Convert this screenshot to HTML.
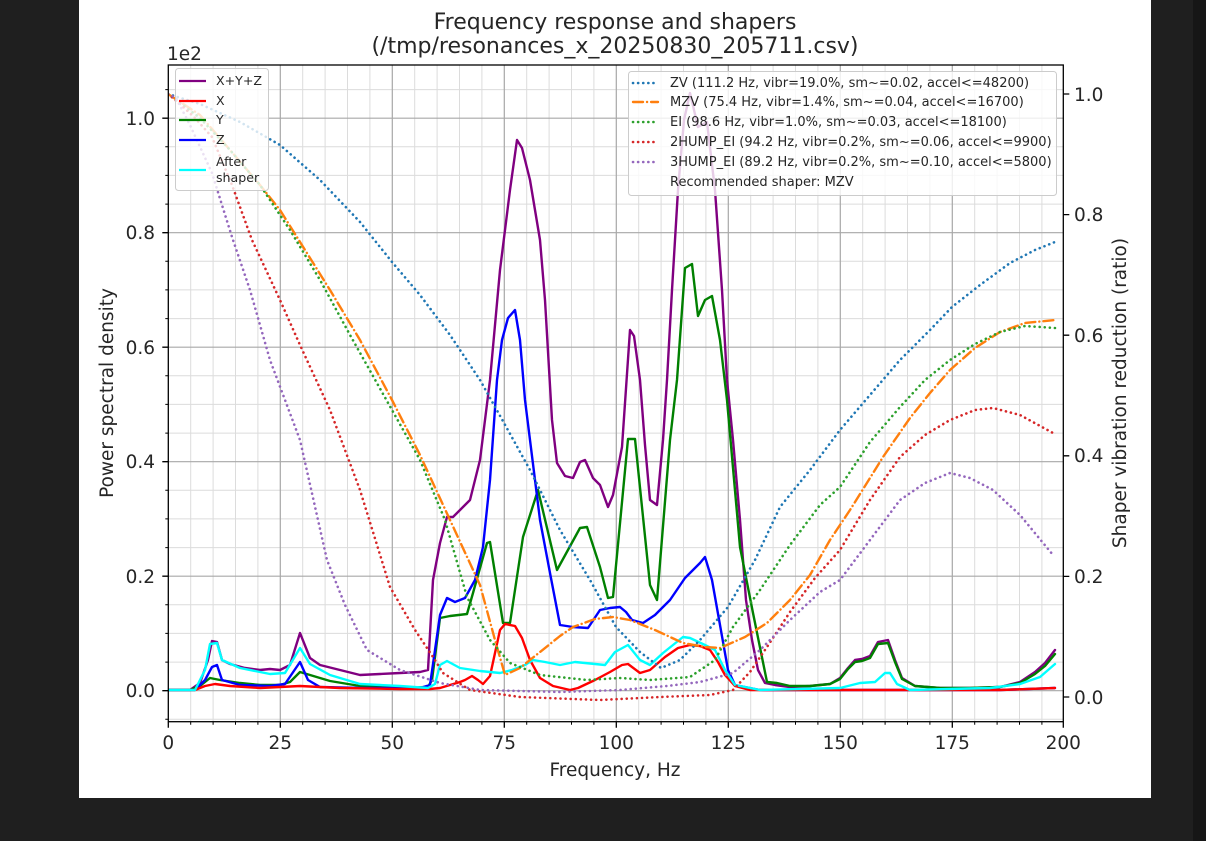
<!DOCTYPE html>
<html><head><meta charset="utf-8"><style>
html,body{margin:0;padding:0;background:#1f1f1f;width:1206px;height:841px;overflow:hidden}
svg{display:block}
text{font-family:"DejaVu Sans","Liberation Sans",sans-serif;fill:#262626}
</style></head><body>
<svg width="1206" height="841" viewBox="0 0 1206 841" xmlns="http://www.w3.org/2000/svg">
<rect x="0" y="0" width="1206" height="841" fill="#1f1f1f"/>
<rect x="1193" y="0" width="13" height="841" fill="#161616"/>
<rect x="79" y="0" width="1072" height="798" fill="#ffffff"/>
<defs><clipPath id="c"><rect x="168.3" y="65" width="895" height="657"/></clipPath></defs>
<path stroke="#dcdcdc" stroke-width="1" fill="none" d="
M190.7 65V722M213.1 65V722M235.5 65V722M257.9 65V722M302.7 65V722M325.1 65V722M347.5 65V722M369.9 65V722M414.7 65V722M437.1 65V722M459.5 65V722M481.9 65V722M526.7 65V722M549.1 65V722M571.5 65V722M593.9 65V722M638.7 65V722M661.1 65V722M683.5 65V722M705.9 65V722M750.7 65V722M773.1 65V722M795.5 65V722M817.9 65V722M862.7 65V722M885.1 65V722M907.5 65V722M929.9 65V722M974.7 65V722M997.1 65V722M1019.5 65V722M1041.9 65V722
M168 719.3H1063M168 662.1H1063M168 633.4H1063M168 604.8H1063M168 547.6H1063M168 518.9H1063M168 490.3H1063M168 433.1H1063M168 404.4H1063M168 375.8H1063M168 318.6H1063M168 289.9H1063M168 261.3H1063M168 204.1H1063M168 175.4H1063M168 146.8H1063M168 89.6H1063"/>
<path stroke="#a8a8a8" stroke-width="1.2" fill="none" d="M280.3 65V722M392.3 65V722M504.3 65V722M616.3 65V722M728.3 65V722M840.3 65V722M952.3 65V722
M168 690.7H1063M168 576.2H1063M168 461.7H1063M168 347.2H1063M168 232.7H1063M168 118.2H1063"/>

<g clip-path="url(#c)" fill="none" stroke-linejoin="round" stroke-linecap="round">
<polyline stroke="#800080" stroke-width="2.4" points="168,690 190,690 200,683 208,660 212,641 217,642 222,660 230,664 245,668 260,670 270,669 280,670 290,665 300,633 310,658 320,665 340,670 360,675 380,674 400,673 420,672 428,670 433,580 440,543 447,517 453,517 462,508 470,500 480,460 490,380 500,270 510,190 517,140 522,148 530,180 540,240 545,300 552,420 557,463 565,476 573,478 580,462 585,460 593,478 600,485 608,507 613,495 622,447 630,330 634,336 640,380 645,445 650,500 657,505 663,440 667,380 672,290 678,190 684,120 690,93 698,127 707,122 715,190 722,290 727,380 733,440 740,520 746,600 752,640 758,670 765,683 775,685 790,687 810,686 830,684 840,678 848,668 855,660 862,659 870,656 878,642 888,640 895,660 902,678 915,686 940,688 970,688 1000,687 1020,682 1035,672 1045,663 1055,650"/>
<polyline stroke="#008000" stroke-width="2.4" points="168,690 190,690 200,686 210,678 220,680 240,683 260,685 280,685 290,682 300,672 310,675 330,681 360,686 400,688 428,687 432,680 440,618 450,616 467,614 473,593 487,543 490,542 503,623 510,623 523,537 538,490 557,570 580,528 587,527 600,567 608,598 613,597 628,439 635,439 650,585 657,600 670,440 677,380 685,268 692,264 698,316 705,300 712,296 720,340 727,400 740,547 753,613 767,682 777,683 790,686 810,686 830,684 840,679 848,669 855,662 862,661 870,658 878,644 888,643 895,662 902,679 915,686 940,688 970,688 1000,687 1020,683 1035,674 1045,666 1055,654"/>
<polyline stroke="#0000ff" stroke-width="2.4" points="168,690 195,690 205,680 212,667 217,665 222,680 240,685 270,686 285,684 300,662 308,680 320,687 360,688 420,688 430,685 435,650 440,615 447,598 455,602 465,598 475,580 483,547 490,480 497,380 502,340 508,318 515,310 520,340 525,400 530,440 540,520 550,573 560,625 573,627 588,628 600,610 610,608 620,607 626,612 632,620 643,623 655,615 670,600 685,578 700,563 705,557 712,580 720,625 728,670 735,685 760,690 1000,690 1055,688"/>
<polyline stroke="#ff0000" stroke-width="2.4" points="168,690 195,690 205,686 215,684 230,686 260,688 300,686 340,688 400,689 430,689 440,688 460,682 465,680 472,676 478,680 483,684 490,676 500,630 505,624 515,626 522,638 530,660 540,678 553,686 570,690 578,688 595,680 610,672 622,665 628,664 640,673 650,670 665,657 678,648 690,645 700,646 710,650 718,662 725,675 735,686 750,690 1000,690 1055,688"/>
<polyline stroke="#00ffff" stroke-width="2.4" points="168,690 195,690 205,670 210,644 217,643 222,660 240,668 270,674 285,673 300,648 310,664 330,675 360,684 400,686 428,688 435,684 440,665 447,661 460,668 480,671 500,673 512,670 525,665 533,660 545,662 560,665 575,662 595,664 605,665 615,652 628,645 640,660 650,665 663,653 683,637 690,638 705,645 715,650 725,670 735,685 760,690 840,688 860,683 875,682 885,673 890,673 897,684 910,690 990,688 1020,684 1040,677 1055,664"/>
<polyline stroke="#1f77b4" stroke-width="2.6" stroke-dasharray="0.1 5" points="168,94 200,104 240,122 280,145 320,180 360,222 392,262 420,295 450,335 480,380 504,423 530,470 560,530 590,580 616,627 640,652 661,668 680,660 700,640 728,607 755,560 780,507 810,470 840,430 870,395 900,360 930,330 952,307 980,285 1010,263 1035,250 1055,242"/>
<polyline stroke="#ff7f0e" stroke-width="2.4" stroke-dasharray="10 4 0.1 4" points="168,94 200,115 230,150 260,185 280,210 305,250 330,290 360,340 392,400 420,455 450,520 480,585 495,640 505,675 520,668 540,652 560,636 573,627 595,619 613,617 630,620 655,630 683,643 705,647 720,648 745,637 767,623 790,600 810,575 830,540 850,510 870,478 883,457 910,418 930,393 950,370 975,348 1000,332 1025,323 1055,320"/>
<polyline stroke="#2ca02c" stroke-width="2.6" stroke-dasharray="0.1 5" points="168,94 200,118 230,150 260,185 290,230 320,280 350,335 392,410 420,460 445,520 467,597 490,640 510,663 540,675 587,680 620,678 650,680 690,677 715,660 733,627 760,590 790,545 820,505 840,487 870,442 900,407 925,380 950,360 975,344 1000,332 1025,326 1055,328"/>
<polyline stroke="#d62728" stroke-width="2.6" stroke-dasharray="0.1 5" points="168,94 179,103 195,118 212,137 232,185 252,240 280,300 300,345 330,410 360,490 390,587 415,630 433,657 443,673 470,690 520,697 600,700 660,697 710,695 733,690 750,672 767,647 790,612 815,578 840,550 870,500 900,457 925,435 950,420 975,410 993,408 1020,415 1053,433"/>
<polyline stroke="#9467bd" stroke-width="2.6" stroke-dasharray="0.1 5" points="168,94 176,98 190,125 212,173 232,237 250,290 270,360 300,440 327,560 345,605 367,650 400,670 440,683 480,690 560,692 620,690 667,686 700,682 733,673 760,650 790,620 820,592 840,580 870,540 900,500 925,483 950,473 970,478 993,490 1020,515 1053,555"/>
</g>

<rect x="168.3" y="65" width="895" height="656.7" fill="none" stroke="#000" stroke-width="1.3"/>
<path stroke="#000" stroke-width="1.3" fill="none" d="M168.3 721.7v6M280.3 721.7v6M392.3 721.7v6M504.3 721.7v6M616.3 721.7v6M728.3 721.7v6M840.3 721.7v6M952.3 721.7v6M1063.3 721.7v6
M168.3 690.7h-6M168.3 576.2h-6M168.3 461.7h-6M168.3 347.2h-6M168.3 232.7h-6M168.3 118.2h-6
M1063.3 697h6M1063.3 576.4h6M1063.3 455.8h6M1063.3 335.2h6M1063.3 214.6h6M1063.3 94h6"/>
<path stroke="#000" stroke-width="1" fill="none" d="M190.7 721.7v3M213.1 721.7v3M235.5 721.7v3M257.9 721.7v3M302.7 721.7v3M325.1 721.7v3M347.5 721.7v3M369.9 721.7v3M414.7 721.7v3M437.1 721.7v3M459.5 721.7v3M481.9 721.7v3M526.7 721.7v3M549.1 721.7v3M571.5 721.7v3M593.9 721.7v3M638.7 721.7v3M661.1 721.7v3M683.5 721.7v3M705.9 721.7v3M750.7 721.7v3M773.1 721.7v3M795.5 721.7v3M817.9 721.7v3M862.7 721.7v3M885.1 721.7v3M907.5 721.7v3M929.9 721.7v3M974.7 721.7v3M997.1 721.7v3M1019.5 721.7v3M1041.9 721.7v3
M168.3 719.3h-3M168.3 662.1h-3M168.3 633.4h-3M168.3 604.8h-3M168.3 547.6h-3M168.3 518.9h-3M168.3 490.3h-3M168.3 433.1h-3M168.3 404.4h-3M168.3 375.8h-3M168.3 318.6h-3M168.3 289.9h-3M168.3 261.3h-3M168.3 204.1h-3M168.3 175.4h-3M168.3 146.8h-3M168.3 89.6h-3"/>

<g font-size="18.5" text-anchor="end">
<text x="155" y="697">0.0</text><text x="155" y="583">0.2</text><text x="155" y="468">0.4</text><text x="155" y="354">0.6</text><text x="155" y="239">0.8</text><text x="155" y="125">1.0</text>
</g>
<g font-size="18.5" text-anchor="start">
<text x="1074" y="704">0.0</text><text x="1074" y="583">0.2</text><text x="1074" y="462">0.4</text><text x="1074" y="342">0.6</text><text x="1074" y="221">0.8</text><text x="1074" y="101">1.0</text>
</g>
<g font-size="18.5" text-anchor="middle">
<text x="168.3" y="749">0</text><text x="280.3" y="749">25</text><text x="392.3" y="749">50</text><text x="504.3" y="749">75</text><text x="616.3" y="749">100</text><text x="728.3" y="749">125</text><text x="840.3" y="749">150</text><text x="952.3" y="749">175</text><text x="1063.3" y="749">200</text>
</g>
<text x="167" y="60" font-size="18.5">1e2</text>
<text x="615" y="776" font-size="18.5" text-anchor="middle">Frequency, Hz</text>
<text transform="translate(113,393) rotate(-90)" font-size="18.5" text-anchor="middle">Power spectral density</text>
<text transform="translate(1126,393) rotate(-90)" font-size="18.5" text-anchor="middle">Shaper vibration reduction (ratio)</text>
<text x="615" y="29" font-size="22" text-anchor="middle">Frequency response and shapers</text>
<text x="615" y="53" font-size="22" text-anchor="middle">(/tmp/resonances_x_20250830_205711.csv)</text>

<rect x="175.5" y="68.5" width="93" height="122" rx="3" fill="#fff" fill-opacity="0.8" stroke="#ccc"/>
<g font-size="12.6">
<line x1="179" y1="81" x2="206" y2="81" stroke="#800080" stroke-width="2.2"/><text x="216" y="85">X+Y+Z</text>
<line x1="179" y1="101" x2="206" y2="101" stroke="#ff0000" stroke-width="2.2"/><text x="216" y="105">X</text>
<line x1="179" y1="120" x2="206" y2="120" stroke="#008000" stroke-width="2.2"/><text x="216" y="124">Y</text>
<line x1="179" y1="140" x2="206" y2="140" stroke="#0000ff" stroke-width="2.2"/><text x="216" y="144">Z</text>
<line x1="179" y1="170" x2="206" y2="170" stroke="#00ffff" stroke-width="2.2"/><text x="216" y="166">After</text><text x="216" y="182">shaper</text>
</g>
<rect x="628.5" y="71.5" width="428" height="124" rx="3" fill="#fff" fill-opacity="0.8" stroke="#ccc"/>
<g font-size="13" stroke-linecap="round">
<line x1="633" y1="83" x2="658" y2="83" stroke="#1f77b4" stroke-width="2.6" stroke-dasharray="0.1 5"/><text x="670" y="87">ZV (111.2 Hz, vibr=19.0%, sm~=0.02, accel&lt;=48200)</text>
<line x1="633" y1="102" x2="658" y2="102" stroke="#ff7f0e" stroke-width="2.4" stroke-dasharray="10 4 0.1 4"/><text x="670" y="106">MZV (75.4 Hz, vibr=1.4%, sm~=0.04, accel&lt;=16700)</text>
<line x1="633" y1="122" x2="658" y2="122" stroke="#2ca02c" stroke-width="2.6" stroke-dasharray="0.1 5"/><text x="670" y="126">EI (98.6 Hz, vibr=1.0%, sm~=0.03, accel&lt;=18100)</text>
<line x1="633" y1="142" x2="658" y2="142" stroke="#d62728" stroke-width="2.6" stroke-dasharray="0.1 5"/><text x="670" y="146">2HUMP_EI (94.2 Hz, vibr=0.2%, sm~=0.06, accel&lt;=9900)</text>
<line x1="633" y1="162" x2="658" y2="162" stroke="#9467bd" stroke-width="2.6" stroke-dasharray="0.1 5"/><text x="670" y="166">3HUMP_EI (89.2 Hz, vibr=0.2%, sm~=0.10, accel&lt;=5800)</text>
<text x="670" y="186">Recommended shaper: MZV</text>
</g>
</svg>
</body></html>
